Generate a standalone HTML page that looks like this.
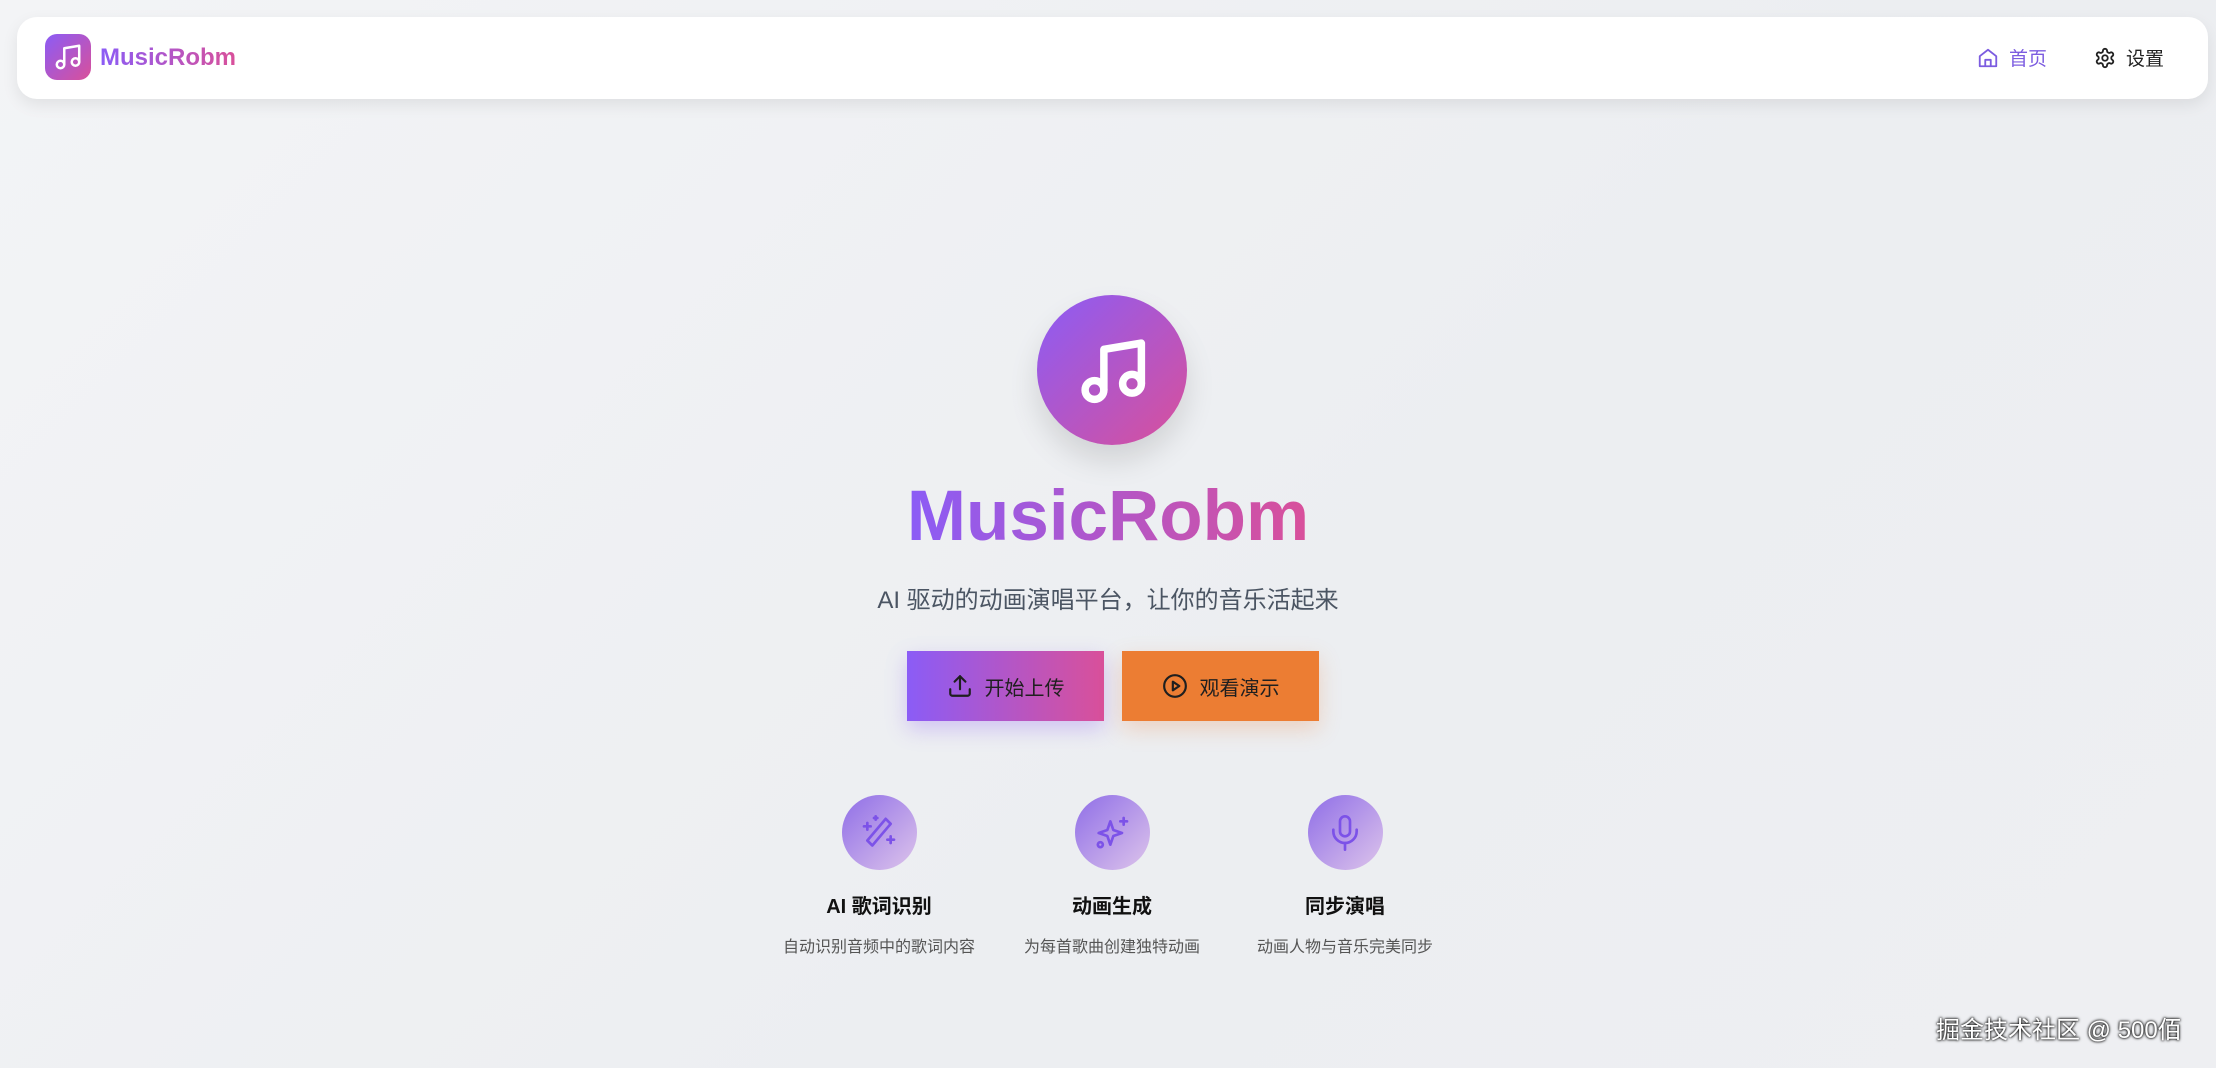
<!DOCTYPE html>
<html><head><meta charset="utf-8"><style>
*{margin:0;padding:0;box-sizing:border-box}
body{width:2216px;height:1068px;overflow:hidden;background:linear-gradient(135deg,#f3f4f6,#eceef1 60%,#eeeff2);font-family:"Liberation Sans","Noto Sans CJK SC",sans-serif;position:relative}
.nav{position:absolute;left:17px;top:17px;width:2191px;height:82px;background:#fff;border-radius:20px;box-shadow:0 6px 16px rgba(0,0,0,.08)}
.logo{position:absolute;left:28px;top:17px;width:46px;height:46px;border-radius:12px;background:linear-gradient(135deg,#8b5cf6,#d9509a)}
.grad{background:linear-gradient(90deg,#8b5cf6,#d9509a);-webkit-background-clip:text;background-clip:text;color:transparent}
.brand{position:absolute;left:83px;top:27px;font-size:24px;font-weight:bold}
.ni{position:absolute;top:27px;font-size:19px;display:flex;align-items:center;gap:10px}
.hero{position:absolute;left:1037px;top:295px;width:150px;height:150px;border-radius:50%;background:linear-gradient(135deg,#8b5cf6,#d9509a);box-shadow:0 16px 30px rgba(0,0,0,.12)}
.title{position:absolute;left:0;width:2216px;top:476px;text-align:center;font-size:71px;font-weight:bold}
.title span{display:inline-block}
.sub{position:absolute;left:0;width:2216px;top:580px;text-align:center;font-size:24px;color:#4b5563}
.btn{position:absolute;top:651px;width:197px;height:70px;display:flex;align-items:center;justify-content:center;gap:12px;font-size:20px;color:#1f1f1f}
.f{position:absolute;top:795px;width:240px;text-align:center}
.fc{width:75px;height:75px;border-radius:50%;margin:0 auto;background:linear-gradient(135deg,#8f6ee8,#ddc4ea);display:flex;align-items:center;justify-content:center}
.ft{font-size:20px;font-weight:bold;color:#111;margin-top:20px}
.fd{font-size:16px;color:#555;margin-top:14px}
.wm{position:absolute;left:1936px;top:1010px;font-size:24px;color:#fff;text-shadow:0 0 3px #000,0 0 2px #000}
</style></head><body>
<div class="nav">
 <div class="logo"><svg width="46" height="46" viewBox="0 0 24 24" fill="none" stroke="#fff" stroke-width="2" stroke-linecap="round" stroke-linejoin="round"><g transform="translate(4.2 4.2) scale(.65)"><path d="M9 18V5l12-2v13"/><circle cx="6" cy="18" r="3"/><circle cx="18" cy="16" r="3"/></g></svg></div>
 <div class="brand grad">MusicRobm</div>
 <div class="ni" style="left:1960px;color:#7c5ce0"><svg width="22" height="22" viewBox="0 0 24 24" fill="none" stroke="#7c5ce0" stroke-width="2" stroke-linejoin="round"><path d="M3 10l9-7 9 7v11H3z"/><path d="M9 21v-7h6v7"/></svg>首页</div>
 <div class="ni" style="left:2077px;color:#222"><svg width="22" height="22" viewBox="0 0 24 24" fill="none" stroke="#222" stroke-width="2" stroke-linejoin="round"><path d="M12.22 2h-.44a2 2 0 0 0-2 2v.18a2 2 0 0 1-1 1.73l-.43.25a2 2 0 0 1-2 0l-.15-.08a2 2 0 0 0-2.73.73l-.22.38a2 2 0 0 0 .73 2.73l.15.1a2 2 0 0 1 1 1.72v.51a2 2 0 0 1-1 1.74l-.15.09a2 2 0 0 0-.73 2.730l.22.38a2 2 0 0 0 2.73.73l.15-.08a2 2 0 0 1 2 0l.43.25a2 2 0 0 1 1 1.73V20a2 2 0 0 0 2 2h.44a2 2 0 0 0 2-2v-.18a2 2 0 0 1 1-1.73l.43-.25a2 2 0 0 1 2 0l.15.08a2 2 0 0 0 2.73-.73l.22-.39a2 2 0 0 0-.73-2.73l-.15-.08a2 2 0 0 1-1-1.74v-.5a2 2 0 0 1 1-1.74l.15-.09a2 2 0 0 0 .73-2.73l-.22-.38a2 2 0 0 0-2.73-.73l-.15.08a2 2 0 0 1-2 0l-.43-.25a2 2 0 0 1-1-1.73V4a2 2 0 0 0-2-2z"/><circle cx="12" cy="12" r="3"/></svg>设置</div>
</div>
<div class="hero"><svg width="150" height="150" viewBox="0 0 24 24" fill="none" stroke="#fff" stroke-linecap="round" stroke-linejoin="round"><g transform="translate(6.2 6.2) scale(.5)"><path d="M9 18V5l12-2v13" stroke-width="2.4"/><circle cx="6" cy="18" r="3" stroke-width="2.4"/><circle cx="18" cy="16" r="3" stroke-width="2.4"/></g></svg></div>
<div class="title"><span class="grad">MusicRobm</span></div>
<div class="sub">AI 驱动的动画演唱平台，让你的音乐活起来</div>
<div class="btn" style="left:907px;background:linear-gradient(90deg,#8b5cf6,#d9509a);box-shadow:0 8px 20px rgba(139,92,246,.3)"><svg width="26" height="26" viewBox="0 0 24 24" fill="none" stroke="#1f1f1f" stroke-width="2" stroke-linecap="round" stroke-linejoin="round"><path d="M21 15v4a2 2 0 0 1-2 2H5a2 2 0 0 1-2-2v-4"/><path d="M17 8l-5-5-5 5"/><path d="M12 3v12"/></svg>开始上传</div>
<div class="btn" style="left:1122px;background:#ec7d33;box-shadow:0 8px 20px rgba(236,125,51,.25)"><svg width="26" height="26" viewBox="0 0 24 24" fill="none" stroke="#1f1f1f" stroke-width="2" stroke-linejoin="round"><circle cx="12" cy="12" r="10"/><path d="M10 8l6 4-6 4z"/></svg>观看演示</div>
<div class="f" style="left:759px"><div class="fc"><svg width="40" height="40" viewBox="0 0 24 24" fill="none" stroke="#7c52e8" stroke-width="1.6" stroke-linecap="round" stroke-linejoin="round"><path d="M16 3.5l3 3L8 19.5l-3-3z"/><path d="M5 6v4M3 8h4M19 14v4M17 16h4M10 2v2M9 3h2"/></svg></div><div class="ft">AI 歌词识别</div><div class="fd">自动识别音频中的歌词内容</div></div>
<div class="f" style="left:992px"><div class="fc"><svg width="40" height="40" viewBox="0 0 24 24" fill="none" stroke="#7c52e8" stroke-width="1.6" stroke-linecap="round" stroke-linejoin="round"><path d="M11 5l1.8 5.2L18 12l-5.2 1.8L11 19l-1.8-5.2L4 12l5.2-1.8z"/><path d="M19 3v4M17 5h4"/><circle cx="5" cy="19" r="1.5"/></svg></div><div class="ft">动画生成</div><div class="fd">为每首歌曲创建独特动画</div></div>
<div class="f" style="left:1225px"><div class="fc"><svg width="40" height="40" viewBox="0 0 24 24" fill="none" stroke="#7c52e8" stroke-width="1.6" stroke-linecap="round" stroke-linejoin="round"><rect x="9" y="2" width="6" height="12" rx="3"/><path d="M19 10v1a7 7 0 0 1-14 0v-1M12 18v4"/></svg></div><div class="ft">同步演唱</div><div class="fd">动画人物与音乐完美同步</div></div>
<div class="wm">掘金技术社区 @ 500佰</div>
</body></html>
